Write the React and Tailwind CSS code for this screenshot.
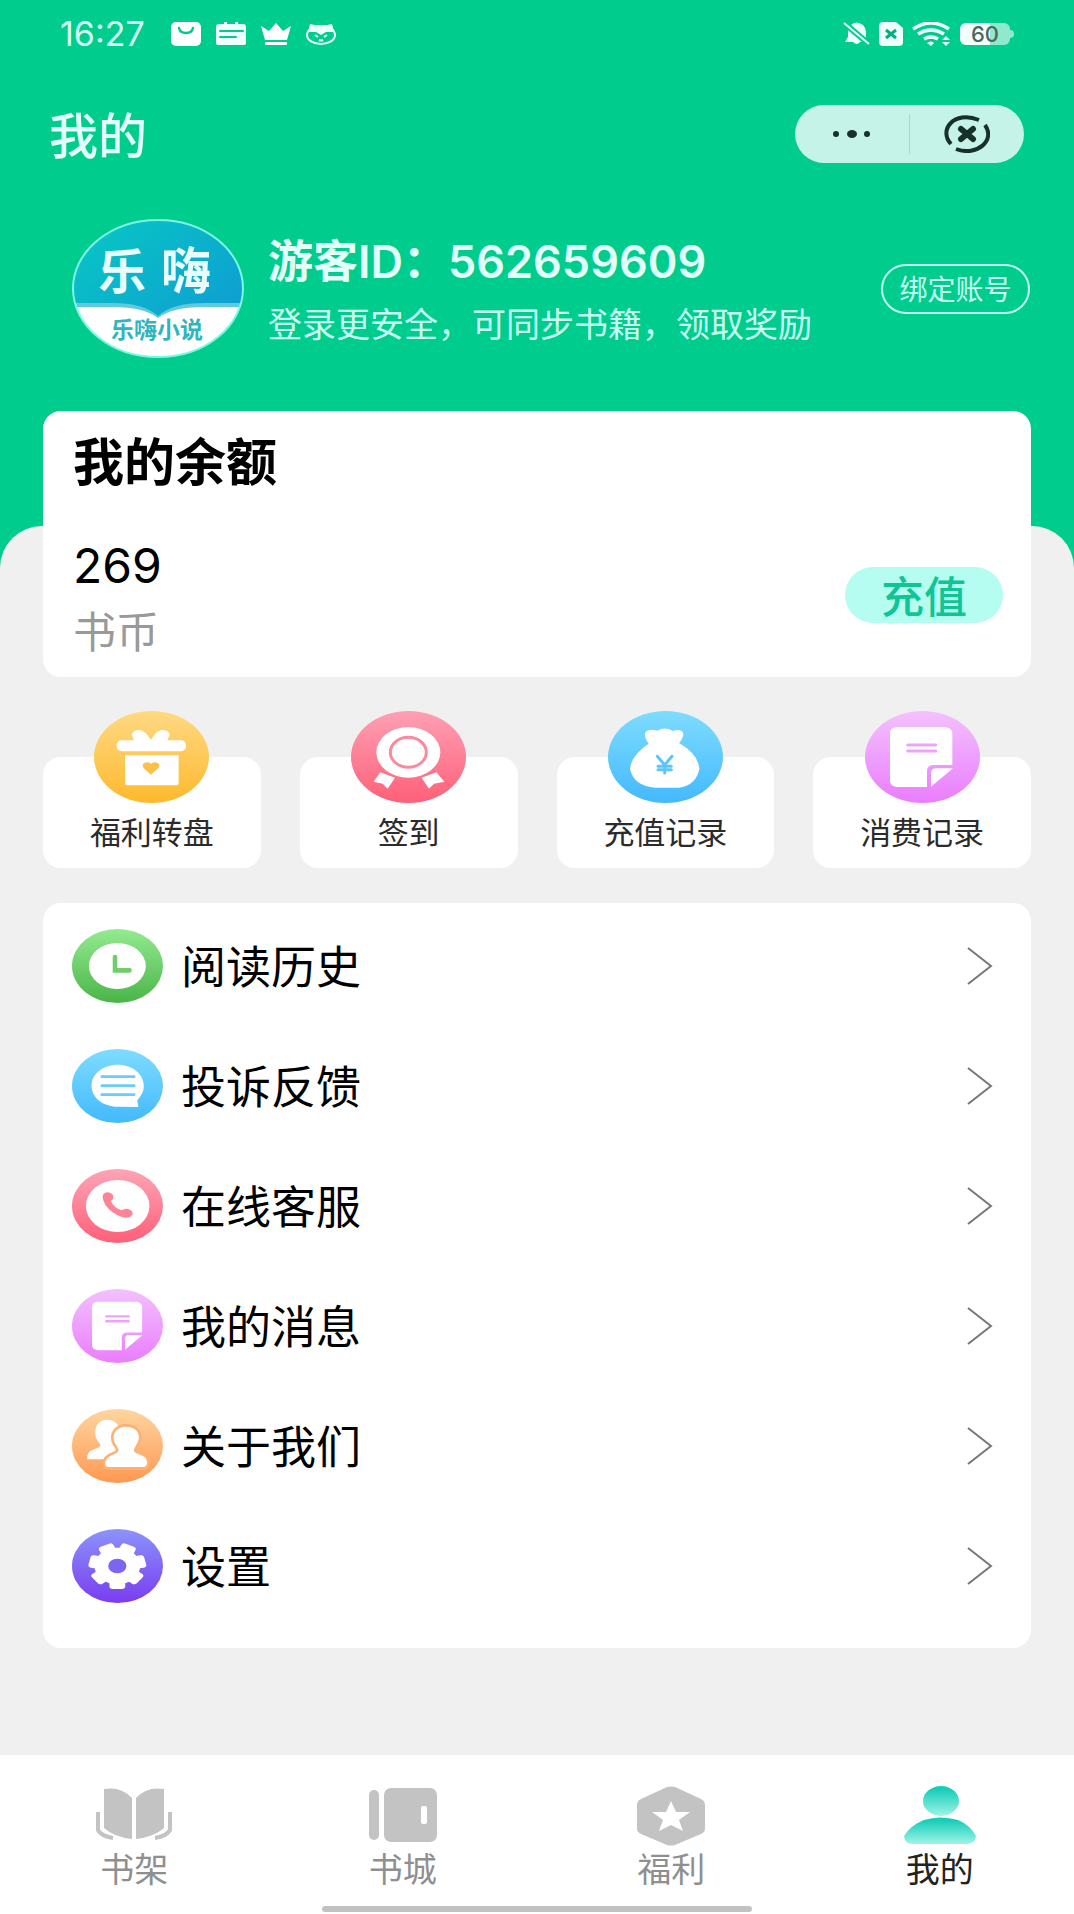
const GiftArt = () => (
  <g fill="#fff">
    <rect x="68" y="88" width="208" height="33" rx="15" />
    <path d="M113 70q8-16 28-12l14 8 16 20 14-20 16-9q22-2 26 14l-9 22H121z" />
    <path d="M93 133H254V215q0 8-8 8H101q-8 0-8-8z" />
    <path d="M171 191l-20-18q-10-11 0-17 12-6 20 2 8-8 20-2 10 6 0 17z" fill="#fcc046" />
  </g>
);

const MedalArt = () => (
  <g fill="#fff">
    <ellipse cx="172" cy="124" rx="96" ry="76" />
    <ellipse cx="172" cy="124" rx="54" ry="45" fill="none" stroke="#fb8a9d" strokeWidth="9" />
    <path d="M88 184l44 16-22 33-15-15-27-6z" />
    <path d="M256 184l-44 16 22 33 15-15 31-6z" />
  </g>
);

const MoneyArt = () => (
  <g>
    <path
      fill="#fff"
      d="M113 62q12-10 36-3 20-13 46 1 26-8 31 8 0 14-13 28 59 34 61 78-10 50-62 56h-70q-64-4-76-56 4-42 56-76-16-18-9-36z"
    />
    <path
      fill="none"
      stroke="#5cc6f8"
      strokeWidth="9"
      strokeLinecap="round"
      d="M148 136l22 26 22-26M170 162v24M150 166h40M150 176h40"
    />
  </g>
);

const NoteArt = () => (
  <g fill="#fff">
    <path d="M95 48H242q20 4 20 20v94h-58q-18 2-18 18v48H95q-20-3-20-18V66q0-15 20-18z" />
    <path d="M214 172h50l-66 55v-42q2-13 16-13z" />
    <path d="M128 102h84M128 120h84" stroke="#eda3fb" strokeWidth="9" strokeLinecap="round" />
  </g>
);

const ClockArt = () => (
  <g>
    <ellipse cx="137" cy="111" rx="86" ry="69" fill="#fff" />
    <path d="M130 84v40h44" fill="none" stroke="#6fce6b" strokeWidth="14" strokeLinecap="round" />
  </g>
);

const ChatArt = () => (
  <g fill="#fff">
    <path d="M138 47c44 0 79 28 79 63 0 18-8 30-20 44l4 20-63-1c-44 0-79-28-79-63s35-63 79-63z" />
    <path d="M90 83h98M90 110h98M90 137h98" stroke="#6accfc" strokeWidth="8" strokeLinecap="round" />
  </g>
);

const PhoneArt = () => (
  <g>
    <ellipse cx="138" cy="111" rx="96" ry="78" fill="#fff" />
    <path
      fill="#fd8496"
      d="M98 73q14-8 26 5 4 12-7 18 9 20 33 28 14-9 28 0 12 11-2 19-16 8-38-4-34-18-43-44-6-16 3-22z"
    />
  </g>
);

const PeopleArt = () => (
  <g fill="#fff">
    <path d="M106 32c22 0 38 14 38 36-2 16-12 24-12 34l2 49H46q-2-22 16-28l20-8c6-4 4-8 0-14-24-28-10-69 24-69z" />
    <path
      stroke="#fdb273"
      strokeWidth="8"
      d="M164 49c28 0 44 18 42 40-2 18-15 26-15 35 1 10 39 8 40 35q0 19-16 19H112q-16 0-16-17c2-27 40-27 41-37 0-9-15-17-15-35-2-22 14-40 42-40z"
    />
  </g>
);

const teeth = [0, 1, 2, 3, 4, 5, 6].map((n) => (n * 360) / 7);

const GearArt = () => (
  <g transform="translate(137 111) scale(1.25 1)" fill="#fff">
    <circle r="55" />
    {teeth.map((angle) => (
      <rect key={angle} x="-19" y="40" width="38" height="29" rx="8" transform={`rotate(${angle})`} />
    ))}
    <circle r="22" fill="#7b66f3" />
  </g>
);

const shortcuts = [
  { label: "福利转盘", from: "#ffd983", to: "#fdb92e", Art: GiftArt },
  { label: "签到", from: "#fda0b4", to: "#fe6078", Art: MedalArt },
  { label: "充值记录", from: "#7edcfe", to: "#44b9fd", Art: MoneyArt },
  { label: "消费记录", from: "#f3c1fd", to: "#ea7dfd", Art: NoteArt },
];

const menu = [
  { label: "阅读历史", from: "#94ea90", to: "#4ab548", Art: ClockArt },
  { label: "投诉反馈", from: "#7edcfe", to: "#44b9fd", Art: ChatArt },
  { label: "在线客服", from: "#fda4b6", to: "#fe6078", Art: PhoneArt },
  { label: "我的消息", from: "#f3c1fd", to: "#ea7dfd", Art: NoteArt, wide: true },
  { label: "关于我们", from: "#fed5a0", to: "#ff9852", Art: PeopleArt },
  { label: "设置", from: "#8b94fa", to: "#7a3cf0", Art: GearArt },
];

function Disc({ id, from, to, width, height, className, children }) {
  return (
    <svg viewBox={`0 0 ${width} ${height}`} preserveAspectRatio="none" className={className} aria-hidden="true">
      <defs>
        <linearGradient id={id} x1="0" y1="0" x2="0" y2="1">
          <stop offset="0" stopColor={from} />
          <stop offset="1" stopColor={to} />
        </linearGradient>
      </defs>
      <ellipse cx={width / 2} cy={height / 2} rx={width / 2} ry={height / 2} fill={`url(#${id})`} />
      {children}
    </svg>
  );
}

function StatusBar() {
  return (
    <div className="flex h-[68px] items-center justify-between pr-[60px] pl-[60px] text-[#d4fff4]">
      <div className="flex items-center gap-[15px]">
        <span className="mr-1 w-[92px] text-[34px] leading-8">16:27</span>
        <svg viewBox="0 0 30 24" className="h-6 w-[30px]">
          <rect width="30" height="24" rx="5" fill="#fff" />
          <path d="M8 6q1 5 7 5t7-5" fill="none" stroke="#00cb8e" strokeWidth="2.4" strokeLinecap="round" />
        </svg>
        <svg viewBox="0 0 30 24" className="h-6 w-[30px]">
          <path d="M3 2h5V0h3v2h8V0h3v2h5q3 0 3 3v16q0 2-3 2H3q-3 0-3-2V5q0-3 3-3z" fill="#effffb" />
          <path d="M4 9h23M4 15h16" stroke="#00cb8e" strokeWidth="2" strokeLinecap="round" />
        </svg>
        <svg viewBox="0 0 30 24" className="h-6 w-[30px]" fill="#fff">
          <path d="M0 4l8 5 7-8 7 8 8-5-4 14H4z" />
          <rect x="4" y="20" width="22" height="3" rx="1" />
        </svg>
        <svg viewBox="0 0 30 24" className="h-6 w-[30px]">
          <ellipse cx="15" cy="13" rx="14" ry="9" fill="none" stroke="#effffb" strokeWidth="2" />
          <path d="M4 2l5 1h12l5-1 2 8-8 0-5 3-5-3-8 0z" fill="#effffb" />
          <path d="M9 13l3 2M21 13l-3 2M13 18q2 1 4 0" fill="none" stroke="#effffb" strokeWidth="2" />
        </svg>
      </div>
      <div className="flex items-center gap-[9px]">
        <svg viewBox="0 0 27 24" className="h-6 w-[27px]" fill="#effffb">
          <path d="M3 6l17 14h-3q-3 4-7 0H2l3-5V8zM8 3q5-5 12 0 3 3 3 7v8z" />
          <path d="M1 1l25 21" stroke="#00cc8e" strokeWidth="6" />
          <path d="M1 1l25 21" stroke="#effffb" strokeWidth="2" />
        </svg>
        <svg viewBox="0 0 24 24" className="h-6 w-6">
          <path d="M4 0h13l7 6v14q0 4-4 4H4q-4 0-4-4V4q0-4 4-4z" fill="#effffb" />
          <path d="M7 8l10 8M17 8L7 16" stroke="#00ae80" strokeWidth="3" />
        </svg>
        <svg viewBox="0 0 39 24" className="h-6 w-[39px]" fill="none" stroke="#effffb" strokeWidth="3.5">
          <path d="M1 7Q19-5 37 7M6 12q13-8 26 0M12 17q7-4 14 0" />
          <path d="M15 21q4-3 7 0l-3 3z" fill="#effffb" stroke="none" />
          <path d="M30 18l4-4 4 4zM30 20l4 4 4-4z" fill="#effffb" stroke="none" />
        </svg>
        <div className="flex items-center">
          <div className="flex h-[22px] w-[50px] items-center justify-center rounded-md bg-linear-to-r from-[#f2fffc] from-60% to-[#90e9cd] to-60% text-[22px] leading-5 font-medium text-[#4d6660]">
            60
          </div>
          <div className="h-2 w-1 rounded-r-sm bg-[#90e9cd]" />
        </div>
      </div>
    </div>
  );
}

function TitleBar() {
  return (
    <div className="flex items-center justify-between pt-[37px] pr-[50px] pl-[49px]">
      <h1 className="pt-[6px] text-[49px] leading-[52px] font-medium text-[#e2fff8]">我的</h1>
      <div className="flex h-[58px] w-[229px] items-center rounded-full bg-[#c6f3e7]">
        <button className="flex h-full flex-1 items-center justify-center" aria-label="更多">
          <svg viewBox="0 0 38 10" className="h-[10px] w-[38px]" fill="#17302a">
            <circle cx="3" cy="5" r="3" />
            <ellipse cx="19" cy="5" rx="5" ry="4" />
            <circle cx="34" cy="5" r="3" />
          </svg>
        </button>
        <div className="h-10 w-px bg-[#a5d8ca]" />
        <button className="flex h-full flex-1 items-center justify-center" aria-label="关闭">
          <svg viewBox="0 0 46 38" className="h-[38px] w-[46px]" fill="none" stroke="#17302a">
            <path d="M7 29C-6 15 10-5 35 5M41 10c11 15-8 32-29 24" strokeWidth="4" />
            <path d="M17 14l12 10M29 14L17 24" strokeWidth="6" strokeLinecap="round" />
          </svg>
        </button>
      </div>
    </div>
  );
}

function Avatar() {
  return (
    <svg viewBox="0 0 172 139" className="h-[139px] w-[172px] shrink-0" role="img" aria-label="乐嗨小说">
      <defs>
        <linearGradient id="cover" x1="0" y1="0" x2="1" y2="1">
          <stop offset="0.1" stopColor="#08c4c4" />
          <stop offset="0.8" stopColor="#0e9fd2" />
        </linearGradient>
        <clipPath id="oval">
          <ellipse cx="86" cy="69.5" rx="85" ry="68.5" />
        </clipPath>
      </defs>
      <g clipPath="url(#oval)">
        <rect width="172" height="139" fill="url(#cover)" />
        <path d="M0 84h40q32 0 46 13 14-13 46-13h40v55H0z" fill="#5fc9e0" />
        <path d="M0 88h40q32 0 46 11 14-11 46-11h40v51H0z" fill="#fff" />
      </g>
      <ellipse cx="86" cy="69.5" rx="85" ry="68.5" fill="none" stroke="#7cf7e4" strokeWidth="2" />
      <text x="26" y="70" fontSize="48" fontWeight="700" fill="#e9fdff">乐</text>
      <text x="89" y="70" fontSize="50" fontWeight="700" fill="#e9fdff">嗨</text>
      <text x="85" y="119" fontSize="23" fontWeight="700" fill="#2fb5bd" textAnchor="middle">乐嗨小说</text>
    </svg>
  );
}

function Profile() {
  return (
    <div className="flex items-center pt-[56px] pr-[44px] pb-[168px] pl-[72px]">
      <Avatar />
      <div className="ml-6 min-w-0 flex-1">
        <p className="mt-[5px] text-[45px] leading-[54px] font-semibold text-[#e2fff8]">游客ID：562659609</p>
        <p className="mt-[13px] text-[34px] leading-[46px] whitespace-nowrap text-[#c8fff0]">
          登录更安全，可同步书籍，领取奖励
        </p>
      </div>
      <button className="h-[50px] w-[149px] shrink-0 rounded-full border-2 border-[#c0fff0] pt-[2px] text-[28px] leading-8 text-[#c8fff0]">
        绑定账号
      </button>
    </div>
  );
}

function Balance() {
  return (
    <section className="-mt-[115px] flex h-[266px] justify-between rounded-[18px] bg-white pr-[28px] pl-[30px]">
      <div>
        <h2 className="mt-[22px] text-[51px] leading-[60px] font-bold text-black">我的余额</h2>
        <p className="mt-[45px] text-[48px] leading-[56px] text-black">269</p>
        <p className="mt-[12px] text-[43px] leading-[52px] text-[#999]">书币</p>
      </div>
      <button className="mt-[156px] h-[56px] w-[158px] rounded-full bg-[#b4fdf0] pt-1 text-[43px] leading-[52px] font-medium text-[#0fc593]">
        充值
      </button>
    </section>
  );
}

function Shortcuts() {
  return (
    <div className="mt-[34px] grid grid-cols-4 gap-[39px]">
      {shortcuts.map(({ label, from, to, Art }, i) => (
        <button key={label} className="flex flex-col items-center">
          <Disc id={`shortcut-${i}`} from={from} to={to} width={345} height={276} className="z-10 h-[92px] w-[115px]">
            <Art />
          </Disc>
          <span className="-mt-[46px] w-full rounded-[18px] bg-white pt-[54px] pb-[13px] text-[31px] leading-[44px] text-[#2b2b2b]">
            {label}
          </span>
        </button>
      ))}
    </div>
  );
}

function Menu() {
  return (
    <ul className="mt-[35px] rounded-[18px] bg-white pt-[3px] pb-[22px]">
      {menu.map(({ label, from, to, Art, wide }, i) => (
        <li key={label}>
          <a href="#" className="flex h-[120px] items-center pr-[38px] pl-[29px]">
            <Disc
              id={`menu-${i}`}
              from={from}
              to={to}
              width={wide ? 340 : 275}
              height={wide ? 276 : 222}
              className="h-[74px] w-[91px]"
            >
              <Art />
            </Disc>
            <span className="ml-[18px] flex-1 pt-1 text-[45px] leading-[56px] text-black">{label}</span>
            <svg viewBox="0 0 26 38" className="h-[38px] w-[26px]" fill="none" stroke="#777" strokeWidth="2">
              <path d="M1 1l23 18L1 37" />
            </svg>
          </a>
        </li>
      ))}
    </ul>
  );
}

const tabs = [
  {
    label: "书架",
    icon: (
      <svg viewBox="0 0 76 60" className="h-[60px] w-[76px]" fill="#c3c3c3">
        <path d="M8 3q17-3 28 9v41Q18 51 8 42zM68 3Q51 0 40 12v41q18-2 28-11z" />
        <path d="M2 26v18q3 6 15 8M74 26v18q-3 6-15 8" fill="none" stroke="#c3c3c3" strokeWidth="4" />
      </svg>
    ),
  },
  {
    label: "书城",
    icon: (
      <svg viewBox="0 0 68 60" className="h-[60px] w-[68px]" fill="#c3c3c3">
        <rect y="4" width="10" height="50" rx="5" />
        <rect x="15" y="2" width="53" height="54" rx="7" />
        <rect x="52" y="20" width="6" height="18" rx="2" fill="#fff" />
      </svg>
    ),
  },
  {
    label: "福利",
    icon: (
      <svg viewBox="0 0 68 60" className="h-[60px] w-[68px]">
        <path d="M30 1q4-1 8 0l26 12q4 2 4 6v24q0 3-4 5L38 59q-4 1-8 0L4 48q-4-2-4-5V19q0-4 4-6z" fill="#c3c3c3" />
        <path d="M34 15l5 11h14l-11 8 4 11-12-6-12 6 4-11-11-8h14z" fill="#fff" />
      </svg>
    ),
  },
  {
    label: "我的",
    active: true,
    icon: (
      <svg viewBox="0 0 72 60" className="h-[60px] w-[72px]">
        <defs>
          <linearGradient id="mine" x1="0" y1="0" x2="0" y2="1">
            <stop offset="0.1" stopColor="#15cdb9" />
            <stop offset="1" stopColor="#a0f4e6" />
          </linearGradient>
        </defs>
        <ellipse cx="37" cy="15" rx="18" ry="15" fill="url(#mine)" />
        <path d="M20 34q16-5 34 0 12 5 18 16-1 8-9 8H8q-7 0-8-8 7-11 20-16z" fill="url(#mine)" />
      </svg>
    ),
  },
];

function TabBar() {
  return (
    <nav className="bg-white pt-[31px]">
      <div className="grid grid-cols-4">
        {tabs.map(({ label, icon, active }) => (
          <a key={label} href="#" className="flex flex-col items-center gap-1">
            {icon}
            <span className={active ? "text-[34px] leading-10 text-[#222]" : "text-[34px] leading-10 text-[#8f8f8f]"}>
              {label}
            </span>
          </a>
        ))}
      </div>
      <div className="mx-auto mt-[16px] mb-[2px] h-[6px] w-2/5 rounded-full bg-[#c2c2c2]" />
    </nav>
  );
}

export default function App() {
  return (
    <div className="flex min-h-screen flex-col bg-[#00cc8e] font-['Inter','Noto_Sans_CJK_SC',sans-serif]" lang="zh-CN">
      <header>
        <StatusBar />
        <TitleBar />
        <Profile />
      </header>
      <main className="flex flex-1 flex-col rounded-t-[42px] bg-[#f0f0f0] px-[43px]">
        <Balance />
        <Shortcuts />
        <Menu />
      </main>
      <TabBar />
    </div>
  );
}
